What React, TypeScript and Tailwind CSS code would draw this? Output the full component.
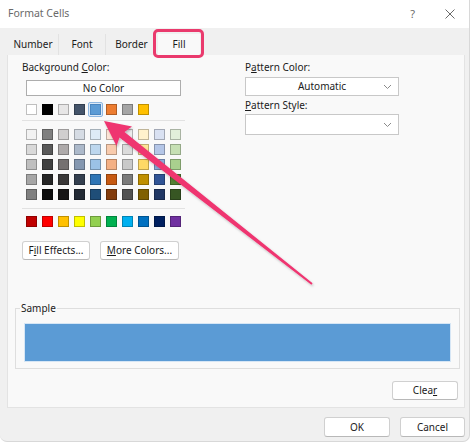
import React from "react"

const themeTop = ["#FFFFFF", "#000000", "#E7E6E6", "#44546A", "#5B9BD5", "#ED7D31", "#A5A5A5", "#FFC000"]

const tints = [
  ["#F2F2F2", "#7F7F7F", "#D0CECE", "#D6DCE4", "#DDEBF7", "#FCE4D6", "#EDEDED", "#FFF2CC", "#D9E1F2", "#E2EFDA"],
  ["#D9D9D9", "#595959", "#AEAAAA", "#ACB9CA", "#BDD7EE", "#F8CBAD", "#DBDBDB", "#FFE699", "#B4C6E7", "#C6E0B4"],
  ["#BFBFBF", "#404040", "#757171", "#8497B0", "#9BC2E6", "#F4B084", "#C9C9C9", "#FFD966", "#8EA9DB", "#A9D08E"],
  ["#A6A6A6", "#262626", "#3A3838", "#333F4F", "#2F75B5", "#C65911", "#7B7B7B", "#BF8F00", "#305496", "#548235"],
  ["#808080", "#0D0D0D", "#171616", "#222A35", "#1F4E78", "#833C0C", "#525252", "#806000", "#203764", "#375623"],
]

const standard = ["#C00000", "#FF0000", "#FFC000", "#FFFF00", "#92D050", "#00B050", "#00B0F0", "#0070C0", "#002060", "#7030A0"]

function Swatch({ color, selected }: { color: string; selected?: boolean }) {
  if (selected) {
    return (
      <div className="w-[11px] h-[11px] relative">
        <div className="absolute -inset-[2px] rounded-[2px] border border-[#8db7e2] bg-[#dbe9f7]" />
        <div className="absolute inset-0 border border-[#4a86c0]" style={{ backgroundColor: color }} />
      </div>
    )
  }
  return <div className="w-[11px] h-[11px] border border-black/25" style={{ backgroundColor: color }} />
}

function Row({ colors, selected }: { colors: string[]; selected?: number }) {
  return (
    <div className="flex gap-[5px] ml-[4px]">
      {colors.map((c, i) => (
        <Swatch key={i} color={c} selected={i === selected} />
      ))}
    </div>
  )
}

function Btn({ children, className = "" }: { children: React.ReactNode; className?: string }) {
  return (
    <div
      className={
        "h-[19px] flex items-center justify-center rounded-[3px] border border-[#d0d0d0] border-b-[#b8b8b8] bg-white text-[10px] " +
        className
      }
    >
      {children}
    </div>
  )
}

function Chevron() {
  return (
    <svg width="9" height="6" viewBox="0 0 9 6" className="text-[#8a8a8a]">
      <path d="M1 1 L4.5 4.5 L8 1" fill="none" stroke="currentColor" strokeWidth="1" />
    </svg>
  )
}

export default function App() {
  return (
    <div className="w-[474px] h-[445px] bg-white relative overflow-hidden font-['Noto_Sans',sans-serif] text-[#1b1b1b]">
      <div className="w-[470px] h-[442px] bg-[#f0f0f0] rounded-b-[7px] border-r border-b border-[#d8d8d8] flex flex-col">
        {/* title bar */}
        <div className="h-[28px] bg-white flex items-center pl-[8px] pr-[14px] shrink-0">
          <span className="text-[10.5px] text-[#6a6a6a]">Format Cells</span>
          <span className="ml-auto text-[11px] text-[#6a6a6a] mr-[30px]">?</span>
          <svg width="10" height="10" viewBox="0 0 10 10">
            <path d="M0.5 0.5 L9.5 9.5 M9.5 0.5 L0.5 9.5" stroke="#6a6a6a" strokeWidth="1" />
          </svg>
        </div>

        {/* tabs */}
        <div className="mt-[6px] h-[21px] pl-[8px] flex items-stretch text-[10px] shrink-0">
          <div className="w-[51px] flex items-center justify-center border-r border-[#e2e2e2]">Number</div>
          <div className="w-[47px] flex items-center justify-center border-r border-[#e2e2e2]">Font</div>
          <div className="w-[51px] flex items-center justify-center">Border</div>
          <div className="ml-[1px] w-[42px] relative flex items-center justify-center bg-[#f9f9f9]">
            Fill
            <div className="absolute -left-[5px] -right-[4px] -top-[5px] -bottom-[3px] rounded-[5px] border-[3px] border-[#ea3a6d]" />
          </div>
        </div>

        {/* panel */}
        <div className="ml-[7px] w-[458px] h-[353px] bg-[#f9f9f9] border border-[#e3e3e3] border-t-0 flex flex-col text-[10px] shrink-0">
          <div className="flex pt-[4px] pl-[14px]">
            {/* left column */}
            <div className="w-[163px] flex flex-col">
              <div className="h-[16px] leading-[16px]">
                Background <u>C</u>olor:
              </div>
              <div className="mt-[5px] ml-[4px] w-[155px] h-[16px] border border-[#adadad] bg-white flex items-center justify-center">
                No Color
              </div>
              <div className="mt-[8px]">
                <Row colors={themeTop} selected={4} />
              </div>
              <div className="mt-[5px] h-px bg-[#e2e2e2]" />
              <div className="mt-[8px] flex flex-col gap-[4px]">
                {tints.map((r, i) => (
                  <Row key={i} colors={r} />
                ))}
              </div>
              <div className="mt-[8px] h-px bg-[#e2e2e2]" />
              <div className="mt-[7px]">
                <Row colors={standard} />
              </div>
              <div className="mt-[14px] flex gap-[10px]">
                <Btn className="w-[68px]">
                  F<u>i</u>ll Effects...
                </Btn>
                <Btn className="w-[79px]">
                  <u>M</u>ore Colors...
                </Btn>
              </div>
            </div>

            {/* right column */}
            <div className="ml-[60px] w-[154px] flex flex-col">
              <div className="h-[16px] leading-[16px]">
                P<u>a</u>ttern Color:
              </div>
              <div className="mt-[2px] h-[19px] border border-[#c8c8c8] bg-white flex items-center relative">
                <span className="flex-1 text-center">Automatic</span>
                <span className="absolute right-[6px] top-[6px]">
                  <Chevron />
                </span>
              </div>
              <div className="h-[16px] leading-[16px] mt-[1px]">
                <u>P</u>attern Style:
              </div>
              <div className="mt-[1px] h-[21px] border border-[#c8c8c8] bg-white relative">
                <span className="absolute right-[6px] top-[7px]">
                  <Chevron />
                </span>
              </div>
            </div>
          </div>

          {/* sample */}
          <div className="mt-[48px] ml-[7px] w-[445px] h-[61px] border border-[#dedede] relative px-[8px] pt-[14px]">
            <span className="absolute left-[4px] -top-[9px] px-[1px] bg-[#f9f9f9] leading-[16px]">Sample</span>
            <div className="h-[39px] bg-[#5b9bd5] border border-[#d6e6f5]" />
          </div>

          <div className="mt-[12px] flex justify-end pr-[6px]">
            <Btn className="w-[66px]">
              Clea<u>r</u>
            </Btn>
          </div>
        </div>

        {/* footer */}
        <div className="mt-[9px] flex justify-end gap-[10px] pr-[4px]">
          <Btn className="w-[66px] h-[20px] border-[#0067c0] border-b-[#0067c0]">OK</Btn>
          <Btn className="w-[65px] h-[20px]">Cancel</Btn>
        </div>
      </div>

      {/* annotation arrow */}
      <svg className="absolute inset-0 pointer-events-none" width="474" height="445" viewBox="0 0 474 445">
        <defs>
          <filter id="sh" x="-10%" y="-10%" width="120%" height="120%">
            <feDropShadow dx="1" dy="1.5" stdDeviation="1.2" floodColor="#000" floodOpacity="0.25" />
          </filter>
        </defs>
        <polygon
          points="104,121 132,126.5 124.5,132 312.6,283.2 311.4,284.8 119.5,137.5 116.5,146"
          fill="#ef3470"
          filter="url(#sh)"
        />
      </svg>
    </div>
  )
}
